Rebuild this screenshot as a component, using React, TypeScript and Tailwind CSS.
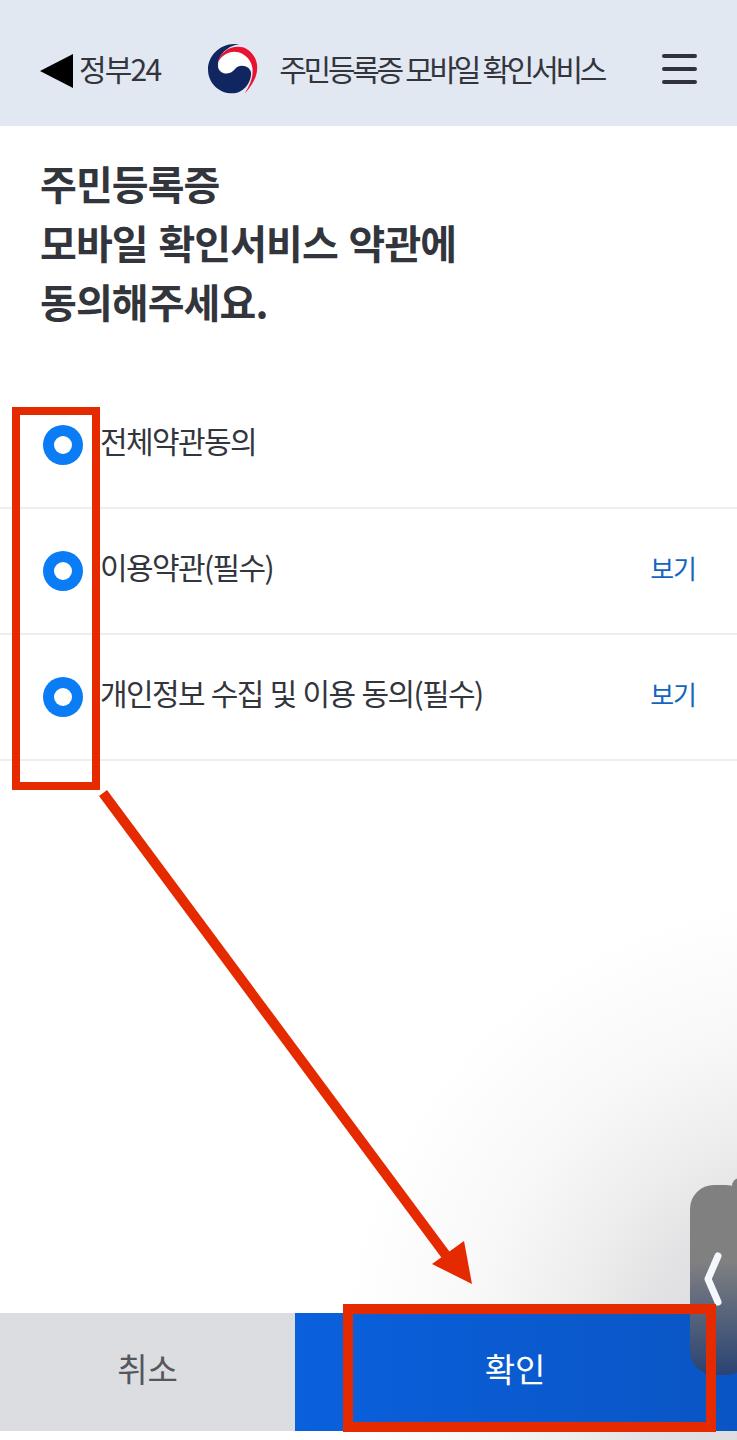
const font = "font-['Noto_Sans_CJK_KR','Noto_Sans',sans-serif]";

const terms = [
  { label: "전체약관동의", view: false },
  { label: "이용약관(필수)", view: true },
  { label: "개인정보 수집 및 이용 동의(필수)", view: true },
];

function GovLogo() {
  return (
    <svg viewBox="50 40 170 160" className="w-[57px] h-[53px] shrink-0">
      <path d="M88 105C95 72 130 56 158 64C190 76 196 120 172 170L120 150L85 120Z" fill="#fff" />
      <path
        d="M150 47C95 38 55 80 55 122C55 165 90 195 128 195C160 195 185 165 185 135C185 120 170 111 155 112C135 113 135 135 112 135C95 135 85 125 85 110C85 80 115 50 150 47Z"
        fill="#0f2660"
      />
      <path
        d="M84 102C92 66 130 48 160 56C202 70 230 130 165 196C196 150 202 102 160 76C130 60 100 74 84 102Z"
        fill="#e8132f"
      />
    </svg>
  );
}

function Radio() {
  return (
    <span className="w-10 h-10 shrink-0 rounded-full bg-[#0a7cf5] flex items-center justify-center">
      <span className="w-[18px] h-[18px] rounded-full bg-white" />
    </span>
  );
}

function TermRow({ label, view }: { label: string; view: boolean }) {
  return (
    <div className="h-[126px] border-b-2 border-[#eeeeee] flex pl-[43px] pr-[41px] pt-[42px]">
      <Radio />
      <span className="ml-[17px] text-[30px] leading-10 tracking-[-1.6px] [word-spacing:1.75px] text-[#33353c] -mt-[5px]">{label}</span>
      {view && <span className="ml-auto text-[26px] leading-10 tracking-[-1px] text-[#1664c0] -mt-[3px]">보기</span>}
    </div>
  );
}

export default function App() {
  return (
    <div className={`relative h-[1440px] w-[737px] overflow-hidden flex flex-col bg-white ${font}`}>
      <div className="absolute inset-0 bg-[radial-gradient(circle_at_810px_1368px,#d6d7da_0px,#e2e2e4_170px,#ededed_240px,#f8f8f8_340px,#ffffff_470px)]" />

      <header className="relative h-[126px] shrink-0 bg-[#e1e8f2] flex items-center pl-10 pr-10 pt-[12px] text-[#33353c]">
        <span className="w-0 h-0 border-y-[17px] border-y-transparent border-r-[33px] border-r-black mt-1" />
        <span className="ml-[6px] text-[30px] tracking-[-1.8px] -mt-[2px]">정부24</span>
        <span className="ml-[46px] -mt-[1px]"><GovLogo /></span>
        <span className="ml-[16px] text-[30px] tracking-[-3.3px] [word-spacing:1px] whitespace-nowrap -mt-[2px]">주민등록증 모바일 확인서비스</span>
        <span className="ml-auto flex flex-col gap-[9px]">
          <span className="w-[35px] h-1 rounded-sm bg-[#2f323b]" />
          <span className="w-[35px] h-1 rounded-sm bg-[#2f323b]" />
          <span className="w-[35px] h-1 rounded-sm bg-[#2f323b]" />
        </span>
      </header>

      <h1 className="relative pl-10 pt-[28px] text-[40px] leading-[59px] font-bold tracking-[-0.9px] [word-spacing:2.5px] text-[#33353c]">
        주민등록증
        <br />
        모바일 확인서비스 약관에
        <br />
        동의해주세요.
      </h1>

      <div className="relative mt-[52px]">
        {terms.map((t) => (
          <TermRow key={t.label} label={t.label} view={t.view} />
        ))}
      </div>

      <div className="relative mt-auto mb-[9px] h-[118px] flex text-[33px]">
        <button className="w-[295px] bg-[#dcdde1] text-[#55575c] pb-[6px]">취소</button>
        <button className="flex-1 bg-gradient-to-r from-[#0a60dd] to-[#0a55c4] text-white pr-[2px] pb-[6px]">확인</button>
      </div>

      {/* side handle */}
      <span className="absolute left-[732px] top-[1178px] w-4 h-4 rounded-full bg-[#808080]" />
      <div className="absolute left-[690px] top-[1185px] w-[60px] h-[190px] rounded-[24px] bg-gradient-to-b from-[#808080] from-40% to-[#2a4372] flex items-center pl-[14px]">
        <svg viewBox="0 0 20 56" className="w-5 h-14 mt-[-2px] ml-[-1px]">
          <path d="M15 5L5 28L15 51" fill="none" stroke="#f4f7fb" strokeWidth="7" strokeLinecap="round" strokeLinejoin="round" />
        </svg>
      </div>

      {/* red annotations */}
      <div className="absolute left-3 top-[407px] w-[88px] h-[383px] border-[8px] border-[#e52a00]" />
      <div className="absolute left-[343px] top-[1304px] w-[373px] h-[128px] border-[10px] border-[#e52a00]" />
      <svg className="absolute left-0 top-0 w-[737px] h-[1440px] pointer-events-none" viewBox="0 0 737 1440">
        <path d="M103 793L448 1258" stroke="#e52a00" strokeWidth="10" fill="none" />
        <path d="M432 1264L464 1241L472 1284Z" fill="#e52a00" />
      </svg>
    </div>
  );
}
